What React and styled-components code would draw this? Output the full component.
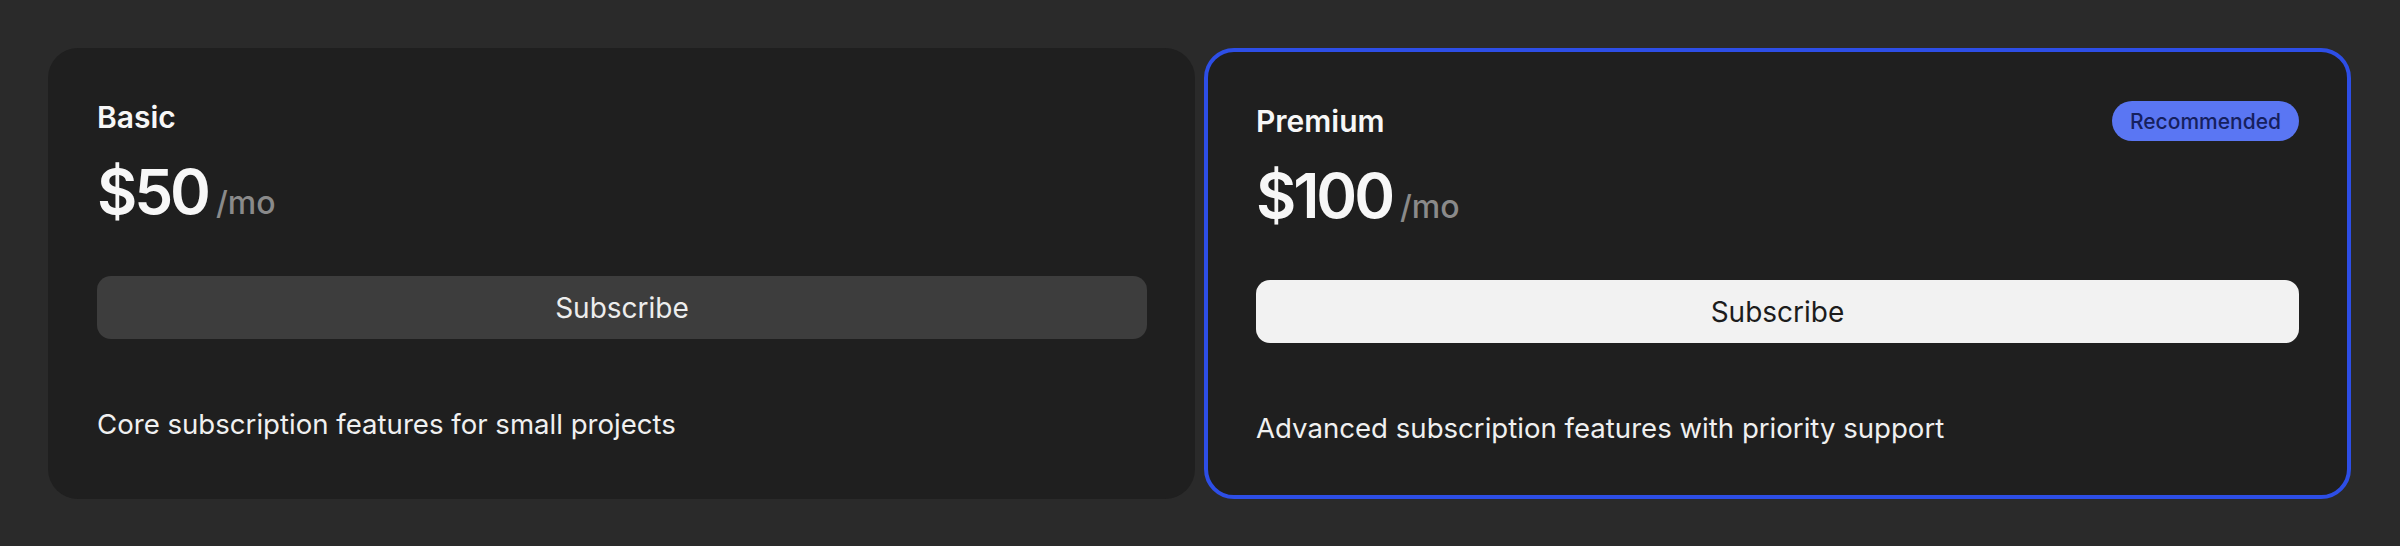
import React from "react";
import styled, { createGlobalStyle } from "styled-components";

const GlobalStyle = createGlobalStyle`
  * {
    box-sizing: border-box;
  }

  body {
    margin: 0;
    background-color: #2a2a2a;
    font-family: Inter, "Noto Sans", "Liberation Sans", sans-serif;
    color: #f5f5f5;
    -webkit-font-smoothing: antialiased;
  }
`;

const plans = [
  {
    name: "Basic",
    price: "$50",
    description: "Core subscription features for small projects",
    featured: false,
  },
  {
    name: "Premium",
    price: "$100",
    description: "Advanced subscription features with priority support",
    featured: true,
    badge: "Recommended",
  },
];

function App() {
  return (
    <>
      <GlobalStyle />
      <Page>
        {plans.map((plan) => (
          <Card key={plan.name} $featured={plan.featured}>
            <Header>
              <Title>{plan.name}</Title>
              {plan.badge && <Badge>{plan.badge}</Badge>}
            </Header>
            <PriceRow>
              <Amount>{plan.price}</Amount>
              <Period>/mo</Period>
            </PriceRow>
            <SubscribeButton type="button" $featured={plan.featured}>
              Subscribe
            </SubscribeButton>
            <Description>{plan.description}</Description>
          </Card>
        ))}
      </Page>
    </>
  );
}

export default App;

const Page = styled.div`
  display: grid;
  grid-template-columns: 1fr 1fr;
  column-gap: 9px;
  padding: 48px 49px 48px 48px;
`;

const Card = styled.div`
  display: flex;
  flex-direction: column;
  background-color: #1f1f1f;
  border-radius: 30px;
  padding: 48px 48px 47px 49px;
  border: ${(p) => (p.$featured ? "4px solid #2d4ee6" : "none")};
  ${(p) => p.$featured && "padding-left: 48px; padding-right: 48px;"}
`;

const Header = styled.div`
  display: flex;
  align-items: center;
  justify-content: space-between;
  height: 42px;
`;

const Title = styled.h3`
  margin: 0;
  font-size: 30px;
  line-height: 42px;
  font-weight: 600;
  color: #f7f7f7;
`;

const Badge = styled.span`
  display: inline-flex;
  align-items: center;
  height: 40px;
  padding: 0 18px;
  border-radius: 20px;
  background-color: #5a76f3;
  color: #16205e;
  font-size: 21px;
  font-weight: 500;
`;

const PriceRow = styled.div`
  display: flex;
  align-items: baseline;
  column-gap: 8px;
  margin-top: 16px;
  line-height: 76px;
`;

const Amount = styled.span`
  font-size: 62px;
  font-weight: 600;
  letter-spacing: -0.05em;
  color: #f7f7f7;
`;

const Period = styled.span`
  font-size: 32px;
  font-weight: 500;
  color: #8a8a8a;
`;

const SubscribeButton = styled.button`
  margin-top: 35px;
  height: 63px;
  width: 100%;
  border: none;
  border-radius: 14px;
  background-color: ${(p) => (p.$featured ? "#f2f2f2" : "#3d3d3d")};
  color: ${(p) => (p.$featured ? "#1c1c1c" : "#ededed")};
  font-family: inherit;
  font-size: 28px;
  font-weight: 400;
  cursor: pointer;
`;

const Description = styled.p`
  margin: 65px 0 0;
  font-size: 27.6px;
  line-height: 40px;
  color: #f0f0f0;
`;
